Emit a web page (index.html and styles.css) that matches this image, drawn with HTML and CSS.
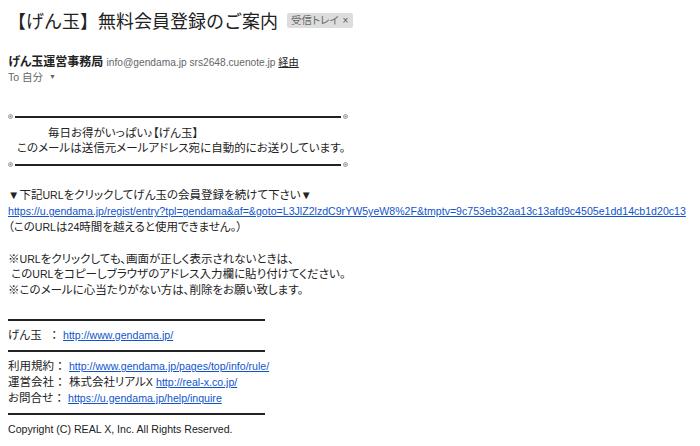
FILE: index.html
```html
<!DOCTYPE html>
<html lang="ja">
<head>
<meta charset="utf-8">
<link rel="stylesheet" href="styles.css">
</head>
<body>
<div class="mail">
  <div class="subject">
    <h1 class="title">【げん玉】無料会員登録のご案内</h1>
    <span class="label">受信トレイ<span class="x">×</span></span>
  </div>
  <div class="from">
    <span class="name">げん玉運営事務局</span>
    <span class="addr">info@gendama.jp srs2648.cuenote.jp <u>経由</u></span>
  </div>
  <div class="to">To 自分 <span class="caret">▼</span></div>

  <div class="body">
    <div class="deco"><span class="ring"></span><span class="bar"></span><span class="ring"></span></div>
    <p class="l indent-big">毎日お得がいっぱい♪【げん玉】</p>
    <p class="l indent-small">このメールは送信元メールアドレス宛に自動的にお送りしています。</p>
    <div class="deco"><span class="ring"></span><span class="bar"></span><span class="ring"></span></div>

    <p class="l gap">▼下記<span class="en">URL</span>をクリックしてげん玉の会員登録を続けて下さい▼</p>
    <p class="l"><a href="#">https://u.gendama.jp/regist/entry?tpl=gendama&amp;af=&amp;goto=L3JlZ2lzdC9rYW5yeW8%2F&amp;tmptv=9c753eb32aa13c13afd9c4505e1dd14cb1d20c13</a></p>
    <p class="l">（この<span class="en">URL</span>は<span class="en">24</span>時間を越えると使用できません。）</p>

    <p class="l gap">※<span class="en">URL</span>をクリックしても、画面が正しく表示されないときは、</p>
    <p class="l">&nbsp;この<span class="en">URL</span>をコピーしブラウザのアドレス入力欄に貼り付けてください。</p>
    <p class="l">※このメールに心当たりがない方は、削除をお願い致します。</p>

    <div class="rule first"></div>
    <p class="l">げん玉&nbsp;&nbsp;&nbsp;：<span class="sep"></span><a href="#">http://www.gendama.jp/</a></p>
    <div class="rule"></div>
    <p class="l">利用規約 ：<span class="sep"></span><a href="#">http://www.gendama.jp/pages/top/info/rule/</a></p>
    <p class="l">運営会社 ：<span class="sep"></span>株式会社リアル<span class="en">X</span> <a href="#">http://real-x.co.jp/</a></p>
    <p class="l">お問合せ ：<span class="sep"></span><a href="#">https://u.gendama.jp/help/inquire</a></p>
    <div class="rule"></div>
    <p class="l en">Copyright (C) REAL X, Inc. All Rights Reserved.</p>
  </div>
</div>
</body>
</html>
```

FILE: styles.css
```css
html, body {
  margin: 0;
  padding: 0;
  background: #ffffff;
}
body {
  font-family: "Liberation Sans", "Noto Sans CJK JP", sans-serif;
  font-size: 11.5px;
  color: #222222;
  font-feature-settings: "palt";
}
.mail {
  padding: 0 8px;
}
.subject {
  display: flex;
  align-items: center;
  gap: 9px;
  height: 40px;
}
.title {
  margin: 0;
  font-size: 18px;
  font-weight: normal;
  color: #222222;
  font-feature-settings: normal;
}
.label {
  display: inline-flex;
  align-items: center;
  gap: 4px;
  background: #dddddd;
  color: #666666;
  font-size: 10.5px;
  line-height: 15px;
  padding: 0 5px 0 4px;
  border-radius: 2px;
}
.label .x {
  font-size: 10px;
  color: #555;
}
.from {
  margin-top: 14px;
  line-height: 16px;
}
.name {
  font-weight: bold;
  font-size: 12px;
  color: #222;
}
.addr {
  font-size: 10.2px;
  color: #666;
}
.addr u {
  color: #222;
}
.to {
  margin-top: -2px;
  font-size: 10.5px;
  color: #666;
  line-height: 16px;
}
.caret {
  font-size: 7px;
  vertical-align: 2px;
  margin-left: 3px;
}
.body {
  margin-top: 24px;
  width: 684px;
}
.l {
  margin: 0;
  line-height: 15.7px;
  white-space: nowrap;
}
.indent-big {
  padding-left: 40px;
  margin-top: 1px;
}
.indent-small { padding-left: 9px; }
.en, a {
  font-size: 10.6px;
}
.sep {
  display: inline-block;
  width: 6px;
}
.gap { margin-top: 16px; }
a {
  color: #1155cc;
  text-decoration: underline;
}
.deco {
  display: flex;
  align-items: center;
  width: 340px;
  height: 15.5px;
}
.ring {
  width: 5px;
  height: 5px;
  box-sizing: border-box;
  border: 1px solid #999;
  border-radius: 50%;
  background: radial-gradient(circle, #999 0 0.8px, #fff 1.2px);
}
.bar {
  flex: 1;
  height: 0;
  border-top: 2px solid #222;
  margin: 0 2px;
}
.rule {
  width: 257px;
  height: 0;
  border-top: 2px solid #222;
  margin: 7px 0;
}
.rule.first {
  margin-top: 20px;
}
```
